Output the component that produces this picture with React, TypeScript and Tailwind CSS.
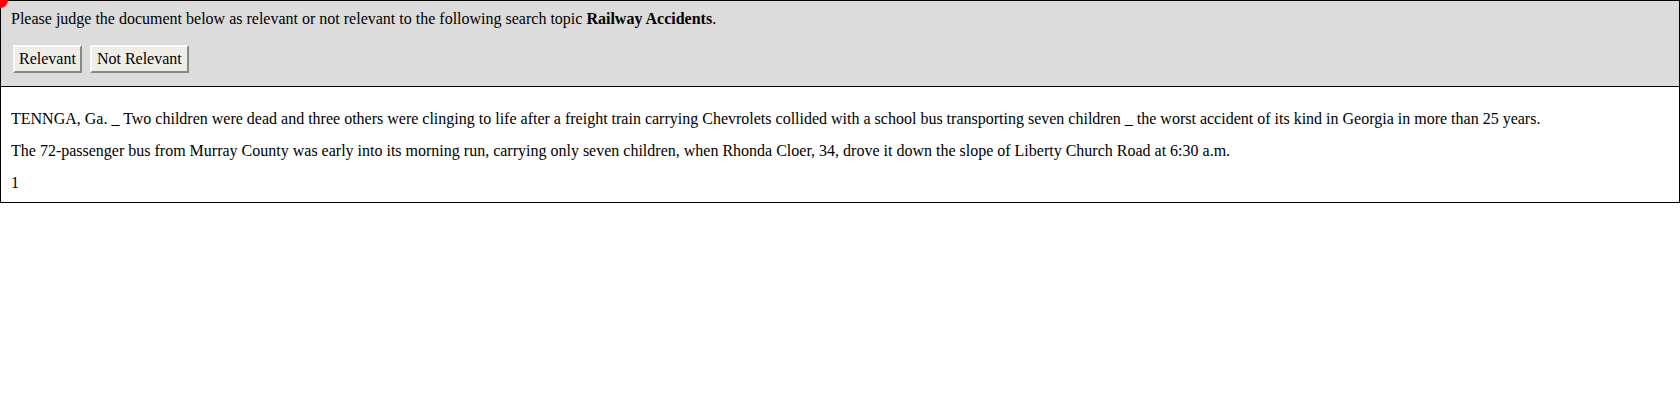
export default function App() {
	const serif = { fontFamily: '"Liberation Serif", "Times New Roman", serif' };
	return (
		<div className="relative w-full bg-white text-black text-[16px]" style={serif}>
			<div className="absolute -left-[8px] -top-[8px] w-[16px] h-[16px] rounded-full bg-[#ff0000]" />
			<div className="border border-black bg-[#dcdcdc] px-[10px] pt-[8px] pb-[13px]">
				<p className="leading-[19px]">
					Please judge the document below as relevant or not relevant to the following search topic{' '}
					<b>Railway Accidents</b>.
				</p>
				<div className="flex gap-[8px] mt-[17px] pl-[2px]">
					<button className="h-[28px] px-[4px] bg-[#efede8] border-2 border-t-[#fbfaf7] border-l-[#fbfaf7] border-b-[#8a8882] border-r-[#8a8882] leading-none">
						Relevant
					</button>
					<button className="h-[28px] px-[5px] bg-[#efede8] border-2 border-t-[#fbfaf7] border-l-[#fbfaf7] border-b-[#8a8882] border-r-[#8a8882] leading-none">
						Not Relevant
					</button>
				</div>
			</div>
			<div className="border border-t-0 border-black px-[10px] pt-[22px] pb-[10px] flex flex-col gap-[13px]">
				<p className="leading-[19px]">
					TENNGA, Ga. _ Two children were dead and three others were clinging to life after a freight train carrying Chevrolets collided with a school bus transporting seven children _ the worst accident of its kind in Georgia in more than 25 years.
				</p>
				<p className="leading-[19px]">
					The 72-passenger bus from Murray County was early into its morning run, carrying only seven children, when Rhonda Cloer, 34, drove it down the slope of Liberty Church Road at 6:30 a.m.
				</p>
				<p className="leading-[19px]">1</p>
			</div>
		</div>
	);
}
